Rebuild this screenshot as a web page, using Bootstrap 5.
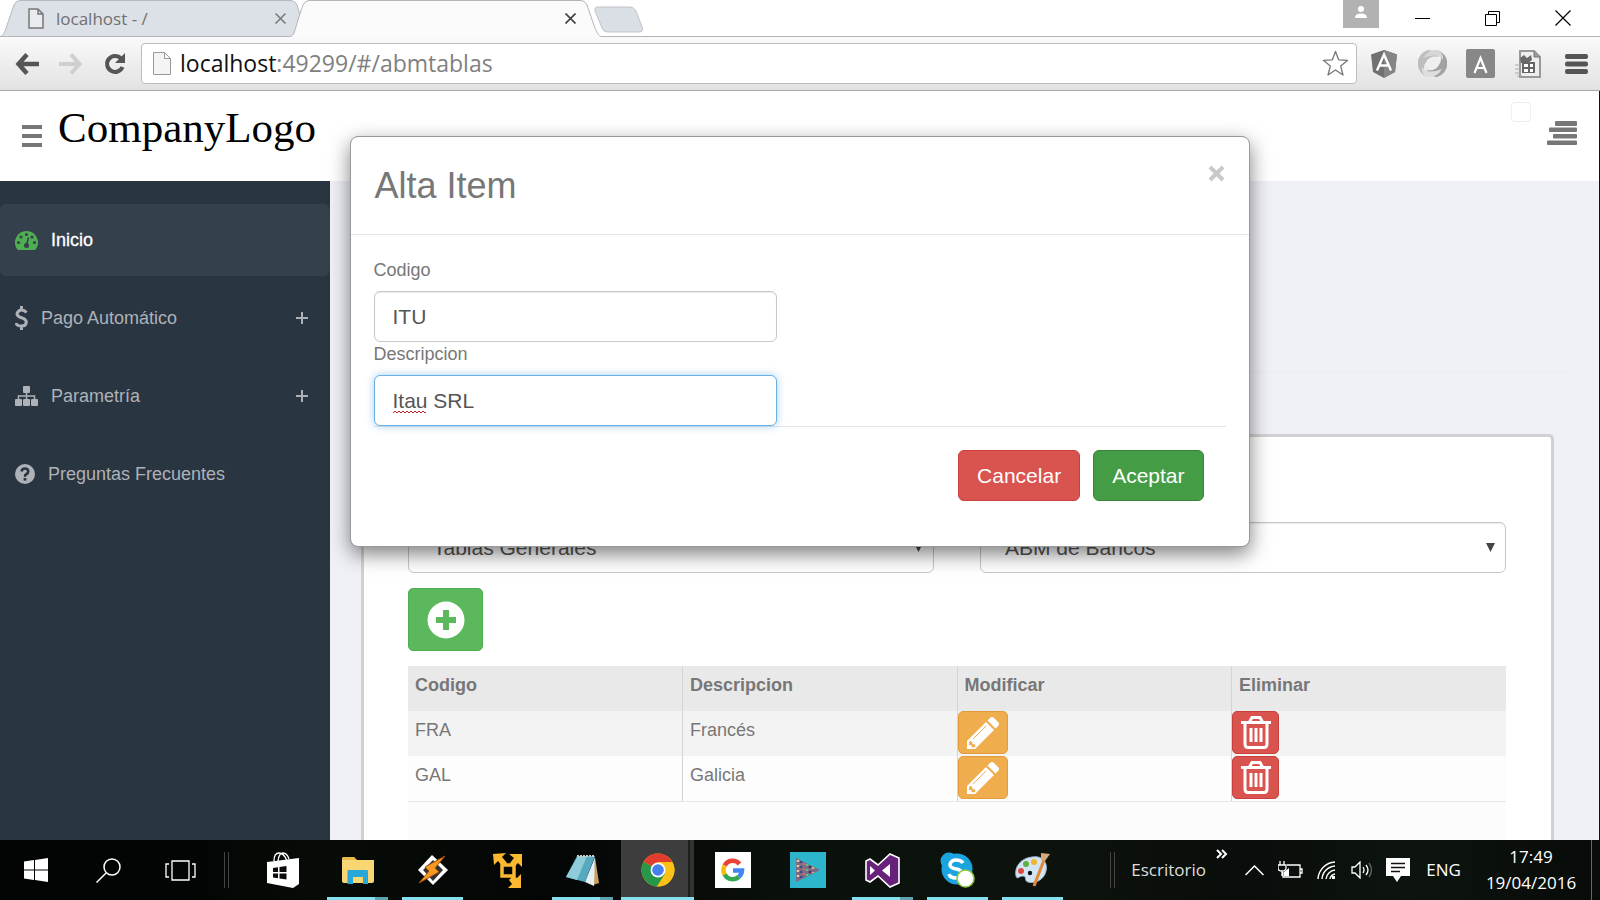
<!DOCTYPE html>
<html lang="es">
<head>
<meta charset="utf-8">
<meta name="viewport" content="width=device-width, initial-scale=1">
<title>ABM Tablas</title>
<link href="https://cdn.jsdelivr.net/npm/bootstrap@5.3.0/dist/css/bootstrap.min.css" rel="stylesheet">
<style>
  body { font-family: "Liberation Sans", Arial, sans-serif; font-size: 18px; line-height: 24px; color: #777; background: #fff; }
  svg { display: block; flex: none; }
  .plain { border: 0; background: none; padding: 0; color: inherit; display: flex; align-items: center; justify-content: center; }
  .chrome-font { font-family: "Open Sans", "Noto Sans", sans-serif; }

  /* browser window */
  .tabstrip { height: 37px; border-bottom: 1px solid #b4b4b4; }
  .tab-item { height: 37px; width: 300px; padding: 0 14px 0 28px; margin-bottom: -1px; font-size: 17px; color: #707070; z-index: 0; }
  .tab-item.current { width: 312px; margin-left: -10px; padding-right: 26px; z-index: 1; color: #333; }
  .tab-shape { position: absolute; inset: 0; width: 100%; height: 100%; z-index: -1; }
  .tab-new { margin: 6px 0 auto -8px; }
  .user-chip { width: 36px; height: 28px; background: #b2b2b2; }
  .win-btns { gap: 55px; margin-left: 36px; margin-right: 29px; }
  .toolbar { height: 54px; padding-left: 5px; background: linear-gradient(#fafafa, #e2e2e2); border-bottom: 1px solid #a9a9a9; }
  .toolbar .nav-btn { width: 44px; height: 44px; }
  .toolbar .ext-btn { width: 48px; height: 44px; }
  .omnibox { height: 41px; margin: 0 3px 0 4px; padding: 0 7px 0 11px; gap: 9px; border: 1px solid #bdbdbd; border-radius: 4px; background: #fff; }
  .omnibox .url { font-size: 23px; line-height: 32px; padding-bottom: 2px; color: #808080; }
  .omnibox .url b { font-weight: 400; color: #111; }

  /* application */
  .app { border-right: 1px solid #111; min-height: 0; }
  .app-head { height: 90px; padding: 0 22px; }
  .brand { font-family: "Liberation Serif", "Times New Roman", serif; font-size: 43px; line-height: 50px; color: #000; text-decoration: none; }
  .burger { margin-top: 34px; }
  .panel-toggle { margin-top: 30px; }
  .tick { appearance: none; width: 20px; height: 20px; margin: 11px 0 0; border: 1px solid #eee; border-radius: 4px; background: #fff; }
  .side { width: 330px; background: #2a3542; padding-top: 23px; }
  .side a { height: 72px; margin-bottom: 6px; padding: 0 22px 0 15px; gap: 13px; border-radius: 6px; color: #aeb2b7; text-decoration: none; }
  .side a.current { background: #35404d; color: #fff; -webkit-text-stroke: .3px #fff; }
  .work { background: #f0f1f7; padding: 0 45px 0 31px; }
  .work-head { height: 191px; border-bottom: 1px solid #ebebf0; margin: 0 -16px 62px; }
  .panel { border: 3px solid #d1d1d1; border-bottom: 0; border-radius: 5px 5px 0 0; background: #fff; padding: 85px 45px 0 44px; }
  .field { height: 51px; font-size: 21px; line-height: 28px; color: #555; border: 1px solid #c8c8c8; border-radius: 6px; background-color: #fff; padding: 0 18px; box-shadow: inset 0 1px 1px rgba(0,0,0,.08); }
  .pick { padding: 0 24px; background-image: url("data:image/svg+xml,%3Csvg xmlns='http://www.w3.org/2000/svg' viewBox='0 0 10 10'%3E%3Cpath d='M0 0h10L5 10z' fill='%23444'/%3E%3C/svg%3E"); background-size: 9px 9px; background-position: right 10px center; }
  .act { border-radius: 5px; border: 1px solid; padding: 0; display: flex; align-items: center; justify-content: center; color: #fff; }
  .act-add { width: 75px; height: 63px; background: #5cb85c; border-color: #4cae4c; margin: 15px 0; }
  .act-edit { width: 50px; height: 43px; background: #f0ad4e; border-color: #e39d38; }
  .act-del { width: 47px; height: 43px; background: #d9534f; border-color: #c9403c; }
  .grid-tbl { table-layout: fixed; margin: 0; color: #777; line-height: 22px; }
  .grid-tbl > :not(caption) > * > * { height: 45px; padding: 8px 7px 0; color: #777; background: #fdfdfd; border: 0; border-left: 1px solid #d4d4d4; vertical-align: top; box-shadow: none; }
  .grid-tbl > thead > tr > th { background: #e9e9e9; }
  .grid-tbl > tbody > tr:first-child > td { background: #f3f3f3; }
  .grid-tbl > :not(caption) > * > :first-child { border-left: 0; }
  .grid-tbl > tbody > tr:last-child > td { border-bottom: 1px solid #e6e6e6; }
  .grid-tbl > tbody > tr > td.act-cell { padding: 0; }
  .grid-rest { height: 100px; background: #fcfcfc; }

  /* dialog */
  .dlg { max-width: 900px; margin: 45px auto 0; }
  .dlg .modal-content { border: 1px solid #999; border-radius: 8px; box-shadow: 0 7px 20px rgba(0,0,0,.5); color: #777; }
  .dlg .modal-header { padding: 24px 24px 23px; height: 98px; border-bottom: 1px solid #e5e5e5; align-items: flex-start; }
  .dlg .modal-title { font-size: 36px; line-height: 50px; font-weight: 400; }
  .dlg .modal-body { padding: 23px 23px 0; }
  .dlg label { line-height: 25px; margin-bottom: 8px; }
  .dlg .field { width: 403px; }
  .dlg .field.active-field { border-color: #66afe9; box-shadow: 0 0 9px rgba(102,175,233,.6); }
  .typo { position: absolute; left: 19px; bottom: 12px; }
  .dlg .modal-footer { margin: 0 23px; padding: 23px 22px 45px; border-top: 1px solid #e5e5e5; gap: 13px; }
  .dlg .modal-footer .btn { height: 51px; margin: 0; padding: 0 18px; font-size: 21px; line-height: 28px; border-radius: 6px; color: #fff; }
  .btn-no { background: #d9534f; border-color: #c9403c; }
  .btn-yes { background: #449d44; border-color: #398439; }

  /* taskbar */
  .taskbar { height: 60px; color: #fff; font-size: 17px; line-height: 26px; background: linear-gradient(90deg, #030504 0 12%, #070c07 20%, #040605 34%, #0a100b 50%, #0d130c 65%, #090d0b 78%, #0d140f 88%, #080b09); }
  .slot { height: 60px; width: 75px; }
  .slot-sys { width: 72px; }
  .slot-tray { width: 36px; }
  .running::after { content: ""; position: absolute; left: 7px; right: 7px; bottom: 0; height: 3px; background: #83e0ee; }
  .running.multi::after { background: linear-gradient(90deg, #83e0ee 48px, #5ea3ad 48px); }
  .running.focused::after { left: 1px; right: 1px; }
  .focused { background: linear-gradient(90deg, transparent 1px, #3c3d3c 1px 68px, #1c1e1c 68px 70px, #333 70px 74px, transparent 74px); }
  .bars { width: 5px; height: 36px; border: solid #444; border-width: 0 1px; margin: 0 16px 0 8px; }
  .desk { color: #ddd; }
  .more { margin: 0 8px 32px 10px; }
  .lang { width: 55px; }
  .clock { width: 120px; }
  .peek { width: 9px; height: 60px; border-left: 1px solid #666; }
</style>
</head>
<body class="vh-100 overflow-hidden d-flex flex-column">

<header class="tabstrip d-flex flex-shrink-0">
  <div class="tab-item position-relative d-flex align-items-center chrome-font">
    <svg class="tab-shape" viewBox="0 0 300 37" preserveAspectRatio="none"><path d="M0 36.500C5 35 4 33 14 5Q16 .5 20 .5H290Q295 .5 297 5L300 15V36.500z" fill="#dce0e7" stroke="#b4b7bb"/></svg>
    <svg width="16" height="21" viewBox="0 0 16 21" fill="#e9ebee" stroke="#777" stroke-width="1.500"><path d="M1 1h9l5 5v14H1zM10 1v5h5"/></svg>
    <span class="ms-2 ps-1 flex-grow-1">localhost - /</span>
    <button class="plain" aria-label="Cerrar pestaña"><svg width="11" height="11" viewBox="0 0 11 11" stroke="#777" stroke-width="1.500"><path d="M.5.5l10 10M10.500.5l-10 10"/></svg></button>
  </div>
  <div class="tab-item current position-relative d-flex align-items-center justify-content-end">
    <svg class="tab-shape" viewBox="0 0 312 37" preserveAspectRatio="none"><path d="M0 36.500C5 36 4 30 13 5Q15 .5 19 .5H291Q295 .5 297 5C305 28 307 36.500 312 36.500V37H0z" fill="#fbfbfb"/><path d="M0 36.500C5 36 4 30 13 5Q15 .5 19 .5H291Q295 .5 297 5C305 28 307 36.500 312 36.500" fill="none" stroke="#b4b4b4"/></svg>
    <button class="plain" aria-label="Cerrar pestaña"><svg width="11" height="11" viewBox="0 0 11 11" stroke="#444" stroke-width="1.700"><path d="M.5.5l10 10M10.500.5l-10 10"/></svg></button>
  </div>
  <button class="plain tab-new" aria-label="Nueva pestaña"><svg width="50" height="27" viewBox="0 0 50 27"><path d="M4 1H36Q40 1 42 5L48 21Q50 26 45 26H14Q9 26 8 22L1 5Q0 1 4 1z" fill="#dadfe6" stroke="#c0c3c8"/></svg></button>
  <div class="ms-auto d-flex">
    <button class="plain user-chip pb-1" aria-label="Usuario"><svg width="12" height="12" viewBox="0 0 12 12" fill="#fff"><circle cx="6" cy="3" r="3"/><path d="M0 12Q0 7.500 6 7.500T12 12z"/></svg></button>
    <div class="win-btns d-flex align-items-center">
      <button class="plain" aria-label="Minimizar"><svg width="15" height="15" stroke="#000"><path d="M0 7.500h15"/></svg></button>
      <button class="plain" aria-label="Restaurar"><svg width="15" height="15" fill="none" stroke="#000"><path d="M.5 3.500h11v11H.5zM3.500 3.500v-3h11v11h-3"/></svg></button>
      <button class="plain" aria-label="Cerrar"><svg width="16" height="16" stroke="#000" stroke-width="1.200"><path d="M.5.5l15 15M15.500.5l-15 15"/></svg></button>
    </div>
  </div>
</header>

<nav class="toolbar d-flex align-items-center flex-shrink-0 chrome-font" aria-label="Navegador">
  <button class="plain nav-btn" aria-label="Atrás"><svg width="24" height="22" viewBox="0 0 24 22" fill="none" stroke="#555" stroke-width="4.500"><path d="M12 1.500L3.500 11l8.500 9.500M4 11h20"/></svg></button>
  <button class="plain nav-btn" aria-label="Adelante"><svg width="24" height="22" viewBox="0 0 24 22" fill="none" stroke="#cfcfcf" stroke-width="4"><path d="M12 1.500l8.500 9.500-8.500 9.500M20 11H0"/></svg></button>
  <button class="plain nav-btn" aria-label="Recargar"><svg width="22" height="22" viewBox="0 0 22 22"><path d="M17 5.500A8 8 0 1 0 18.500 14" fill="none" stroke="#555" stroke-width="4"/><path d="M21 0v10H11z" fill="#555"/></svg></button>
  <div class="omnibox flex-grow-1 d-flex align-items-center">
    <svg width="18" height="23" viewBox="0 0 18 23" fill="#f4f4f4" stroke="#999"><path d="M.5.5h11l6 6v16H.5zM11.500.5v6h6"/></svg>
    <span class="url flex-grow-1"><b>localhost</b>:49299/#/abmtablas</span>
    <button class="plain" aria-label="Favorito"><svg width="27" height="27" viewBox="0 0 27 27" fill="#fff" stroke="#777" stroke-width="1.300" stroke-linejoin="round"><path d="M13.500 1.500l3.200 8.300 9 .5-7 5.800 2.300 8.900-7.500-5-7.500 5 2.300-8.900-7-5.800 9-.5z"/></svg></button>
  </div>
  <button class="plain ext-btn" aria-label="Angular"><svg width="26" height="28" viewBox="0 0 26 28"><path d="M13 0l13 4.500-2 17.500-11 6-11-6L0 4.500z" fill="#707070"/><path d="M13 0l13 4.500-2 17.500-11 6z" fill="#858585"/><path d="M6 20.500L13 4.500l7 16M8.500 15.500h9" fill="none" stroke="#fff" stroke-width="2.400"/></svg></button>
  <button class="plain ext-btn" aria-label="JSON"><svg width="29" height="29" viewBox="0 0 29 29"><path d="M10 1A14 14 0 0 0 10 28Q3 20 8 13T20 8Q17 1 10 1z" fill="#bdbdbd"/><path d="M19 28A14 14 0 0 0 19 1Q26 9 21 16T9 21Q12 28 19 28z" fill="#a2a2a2"/><path d="M5 9Q10 0 20 1q6 4 5 10Q20 3 5 9z" fill="#d6d6d6"/><path d="M24 20q-5 9-15 8-6-4-5-10Q9 26 24 20z" fill="#dedede"/><circle cx="14.500" cy="14.500" r="6" fill="#efefef"/></svg></button>
  <button class="plain ext-btn" aria-label="Extensión A"><svg width="29" height="29" viewBox="0 0 29 29"><rect width="29" height="29" rx="2" fill="#878787"/><path d="M8.500 24l6-15 6 15M10.500 19h8" fill="none" stroke="#fff" stroke-width="2.200"/></svg></button>
  <button class="plain ext-btn" aria-label="Documento"><svg width="26" height="28" viewBox="0 0 26 28"><path d="M5 1h14l6 6v20H5z" fill="#eee" stroke="#999" stroke-width="2"/><path d="M19 1v6h6" fill="#999" stroke="#777"/><path d="M5 8l4-3 3 3 4-3 1 5-4 3H6z" fill="#6a6a6a"/><path d="M7 12h13v11H7z" fill="#666"/><path d="M9 14h4v3H9zM15 14h3v3h-3zM9 19h4v3H9zM15 19h3v3h-3z" fill="#fff"/><path d="M0 15h5M0 19h5M0 23h6M2 26h5" stroke="#aaa"/></svg></button>
  <button class="plain ext-btn" aria-label="Menú"><svg width="23" height="20" viewBox="0 0 23 20" fill="#555"><rect width="23" height="5" rx="2"/><rect y="7.500" width="23" height="5" rx="2"/><rect y="15" width="23" height="5" rx="2"/></svg></button>
</nav>

<div class="app flex-grow-1 position-relative d-flex flex-column overflow-hidden">
  <div class="app-head d-flex align-items-start flex-shrink-0 bg-white">
    <button class="plain burger" aria-label="Mostrar menú"><svg width="20" height="22" fill="#777"><path d="M0 0h20v4H0zM0 9h20v4H0zM0 18h20v4H0z"/></svg></button>
    <a class="brand mt-2 ps-3 pt-1" href="#">CompanyLogo</a>
    <input class="tick ms-auto" type="checkbox" aria-label="Fijar cabecera">
    <button class="plain panel-toggle ms-3" aria-label="Panel derecho"><svg width="30" height="24" fill="#777"><rect x="8" width="22" height="5" rx="1"/><rect x="2" y="6.500" width="28" height="4.500" rx="1"/><rect x="6" y="13" width="24" height="4.500" rx="1"/><rect y="19.500" width="30" height="4.500" rx="1"/></svg></button>
  </div>

  <div class="d-flex flex-grow-1 overflow-hidden">
    <nav class="side flex-shrink-0" aria-label="Principal">
      <a class="current d-flex align-items-center" href="#">
        <svg width="23" height="19" viewBox="0 0 23 19"><path d="M11.500 0A11.500 11.500 0 0 0 2 18q.5 1 1.500 1h16q1 0 1.500-1A11.500 11.500 0 0 0 11.500 0z" fill="#4fad52"/><g fill="#35404d"><circle cx="3.500" cy="11.500" r="1.600"/><circle cx="6" cy="6" r="1.600"/><circle cx="11.500" cy="3.500" r="1.600"/><circle cx="17" cy="6" r="1.600"/><circle cx="19.500" cy="11.500" r="1.600"/><circle cx="11.500" cy="14.500" r="2.500"/></g><path d="M11.500 14.500l2-8" stroke="#35404d" stroke-width="1.500"/></svg>
        <span>Inicio</span></a>
      <a class="d-flex align-items-center" href="#">
        <svg width="13" height="24" viewBox="0 0 13 24" fill="none" stroke="#aeb2b7" stroke-width="3"><path d="M11.500 6.500Q9.500 4 6.500 4T2 7.500Q2 10.500 6.500 11.700T11.300 16Q11.300 20 6.500 20T1 17M6.500 0v4M6.500 20v4"/></svg>
        <span>Pago Automático</span><svg class="ms-auto" width="12" height="12" stroke="#aeb2b7" stroke-width="2"><path d="M0 6h12M6 0v12"/></svg></a>
      <a class="d-flex align-items-center" href="#">
        <svg width="23" height="20" viewBox="0 0 23 20" fill="#aeb2b7"><rect x="8" width="7" height="7" rx="1"/><rect y="13" width="7" height="7" rx="1"/><rect x="8" y="13" width="7" height="7" rx="1"/><rect x="16" y="13" width="7" height="7" rx="1"/><path d="M11.500 6v8M3.500 14v-4h16v4" fill="none" stroke="#aeb2b7" stroke-width="1.500"/></svg>
        <span>Parametría</span><svg class="ms-auto" width="12" height="12" stroke="#aeb2b7" stroke-width="2"><path d="M0 6h12M6 0v12"/></svg></a>
      <a class="d-flex align-items-center" href="#">
        <svg width="20" height="20" viewBox="0 0 20 20"><circle cx="10" cy="10" r="10" fill="#aeb2b7"/><path d="M6.500 7.500Q7 4.500 10 4.500T13.300 7.500Q13.300 9 11.500 10T10 12.800" fill="none" stroke="#2a3542" stroke-width="2.600"/><path d="M8.600 14h2.800v2.600H8.600z" fill="#2a3542"/></svg>
        <span>Preguntas Frecuentes</span></a>
    </nav>

    <main class="work flex-grow-1">
      <div class="work-head"></div>
      <section class="panel">
        <div class="row" style="--bs-gutter-x:46px">
          <div class="col-6"><select class="form-select field pick" aria-label="Grupo"><option>Tablas Generales</option></select></div>
          <div class="col-6"><select class="form-select field pick" aria-label="Tabla"><option>ABM de Bancos</option></select></div>
        </div>
        <button class="act act-add" aria-label="Agregar"><svg width="38" height="38" viewBox="0 0 38 38"><circle cx="19" cy="19" r="18.500" fill="#fff"/><path d="M19 9v20M9 19h20" stroke="#5cb85c" stroke-width="6"/></svg></button>
        <table class="table grid-tbl">
          <thead><tr><th>Codigo</th><th>Descripcion</th><th>Modificar</th><th>Eliminar</th></tr></thead>
          <tbody>
            <tr><td>FRA</td><td>Francés</td>
              <td class="act-cell"><button class="act act-edit" aria-label="Modificar FRA"><svg width="32" height="32" viewBox="0 0 32 32"><path d="M0 32v-8L19 5l8 8L8 32zM20.500 3.500L23 1q2-2 4 0l4 4q2 2 0 4l-2.500 2.500z" fill="#fff"/><path d="M6 22L19 9" stroke="#f0ad4e"/><path d="M2 26l1-2 2 .5.5 2.500 2.500.5.500 2-2 1-2-.5v-2H2z" fill="#f0ad4e"/></svg></button></td>
              <td class="act-cell"><button class="act act-del" aria-label="Eliminar FRA"><svg width="30" height="33" viewBox="0 0 30 33" fill="none" stroke="#fff" stroke-width="3"><path d="M0 6.500h30M8.500 6L11 1.500h8L21.500 6M4 7v21q0 3.500 3 3.500h16q3 0 3-3.500V7"/><path d="M10 12v14M15 12v14M20 12v14"/></svg></button></td></tr>
            <tr><td>GAL</td><td>Galicia</td>
              <td class="act-cell"><button class="act act-edit" aria-label="Modificar GAL"><svg width="32" height="32" viewBox="0 0 32 32"><path d="M0 32v-8L19 5l8 8L8 32zM20.500 3.500L23 1q2-2 4 0l4 4q2 2 0 4l-2.500 2.500z" fill="#fff"/><path d="M6 22L19 9" stroke="#f0ad4e"/><path d="M2 26l1-2 2 .5.5 2.500 2.500.5.500 2-2 1-2-.5v-2H2z" fill="#f0ad4e"/></svg></button></td>
              <td class="act-cell"><button class="act act-del" aria-label="Eliminar GAL"><svg width="30" height="33" viewBox="0 0 30 33" fill="none" stroke="#fff" stroke-width="3"><path d="M0 6.500h30M8.500 6L11 1.500h8L21.500 6M4 7v21q0 3.500 3 3.500h16q3 0 3-3.500V7"/><path d="M10 12v14M15 12v14M20 12v14"/></svg></button></td></tr>
          </tbody>
        </table>
        <div class="grid-rest"></div>
      </section>
    </main>
  </div>

  <div class="modal d-block position-absolute" role="dialog" aria-labelledby="dlgTitle">
    <div class="modal-dialog dlg">
      <form class="modal-content">
        <div class="modal-header">
          <h1 class="modal-title" id="dlgTitle">Alta Item</h1>
          <button type="button" class="plain pt-1 ms-auto" aria-label="Cerrar"><svg width="17" height="17" viewBox="0 0 17 17" stroke="#c9c9c9" stroke-width="4"><path d="M2 2l13 13M15 2L2 15"/></svg></button>
        </div>
        <div class="modal-body">
          <label class="d-block" for="cod">Codigo</label>
          <input class="form-control field" id="cod" type="text" value="ITU">
          <label class="d-block" for="desc">Descripcion</label>
          <div class="position-relative">
            <input class="form-control field active-field" id="desc" type="text" value="Itau SRL" spellcheck="false">
            <svg class="typo" width="35" height="4" aria-hidden="true"><path d="M0 3l2-2 2 2 2-2 2 2 2-2 2 2 2-2 2 2 2-2 2 2 2-2 2 2 2-2 2 2 2-2 2 2 1-1" fill="none" stroke="#c0202a"/></svg>
          </div>
        </div>
        <div class="modal-footer">
          <button type="button" class="btn btn-no">Cancelar</button>
          <button type="button" class="btn btn-yes">Aceptar</button>
        </div>
      </form>
    </div>
  </div>
</div>

<footer class="taskbar d-flex align-items-center flex-shrink-0 chrome-font">
  <button class="plain slot slot-sys" aria-label="Inicio de Windows"><svg width="24" height="24" viewBox="0 0 24 24" fill="#fff"><path d="M0 3.500l10-1.400v9.400H0zM11 2l13-2v11.500H11zM0 12.500h10v9.400L0 20.500zM11 12.500h13V24l-13-2z"/></svg></button>
  <button class="plain slot slot-sys" aria-label="Buscar"><svg width="25" height="25" fill="none" stroke="#fff" stroke-width="1.500"><circle cx="16" cy="9" r="8"/><path d="M10 15L.5 24.500"/></svg></button>
  <button class="plain slot slot-sys" aria-label="Vista de tareas"><svg width="31" height="21" fill="none" stroke="#fff" stroke-width="1.300"><path d="M7 1h17v19H7zM4 4H1v13h3M27 4h3v13h-3"/></svg></button>
  <div class="bars"></div>
  <button class="plain slot" aria-label="Tienda"><svg width="32" height="36" viewBox="0 0 32 36"><path d="M7 9Q7 1 12 1t8 8M11 9Q12 1 16 1t6 6" fill="none" stroke="#fff" stroke-width="1.300"/><path d="M0 10l32-4v26l-6 4-26-5z" fill="#fff"/><path d="M6 16l5-.8V20H6zM12.500 15l7-1v6h-7zM6 21.500h5v4.800L6 25.500zM12.500 21.500h7v6l-7-1z" fill="#0a0c0a"/></svg></button>
  <button class="plain slot position-relative running multi" aria-label="Explorador"><svg width="32" height="27" viewBox="0 0 32 27"><path d="M0 2q0-2 2-2h10l3 3h17v21q0 2-2 2H2q-2 0-2-2z" fill="#f7d673"/><path d="M0 2q0-2 2-2h10l2 3H0z" fill="#e8b84a"/><path d="M5.500 27V14q0-1 1-1h18.500q1 0 1 1v13h-5v-7H11v7z" fill="#28a8d8"/></svg></button>
  <button class="plain slot position-relative running" aria-label="Winamp"><svg width="30" height="30" viewBox="0 0 30 30"><path d="M14 0l16 15-15 15L0 15z" fill="#fff"/><path d="M15 5l10 10-10 11L5 15z" fill="#333"/><path d="M27 1L7 12l4 4L1 28l20-11-4-4z" fill="#f79a24" stroke="#a44f09"/></svg></button>
  <button class="plain slot" aria-label="Máquina virtual"><svg width="30" height="35" viewBox="0 0 30 35"><g fill="#fbb92f"><path d="M0 1l13-1-4 4 5 6-4 4-5-6-4 4z"/><path d="M16 1h13v13l-4-4-4 4-4-4 4-5z"/><path d="M28 21v14H15l4-4-3-4 4-4 4 2z"/></g><path d="M9 12h12v11H9z" fill="none" stroke="#fbb92f" stroke-width="3.500"/></svg></button>
  <button class="plain slot position-relative running multi" aria-label="Bloc de notas"><svg width="33" height="31" viewBox="0 0 33 31"><path d="M29 2l4 26-6 2z" fill="#c9a15c"/><path d="M29 2l-1 29-9-4z" fill="#e4f1f4"/><path d="M11 1h18l-10 26L0 22z" fill="#56a9bf"/><path d="M12 1h9l-10 24L0 22z" fill="#8fcbd8"/><path d="M11 1h18" stroke="#ccc" stroke-width="2" stroke-dasharray="2 1"/></svg></button>
  <button class="plain slot position-relative running focused" aria-label="Chrome"><svg width="34" height="34" viewBox="0 0 34 34"><circle cx="17" cy="17" r="16.500" fill="#fbc116"/><path d="M17 17L2.700 8.700A16.500 16.500 0 0 1 31.300 9H17z" fill="#e33b2e"/><path d="M2.700 8.700A16.500 16.500 0 0 0 16 33.500L24 21l-7-4z" fill="#279847"/><path d="M31.300 9H17v8l7 4-8 12.500A16.500 16.500 0 0 0 31.300 9z" fill="#fbc116"/><circle cx="17" cy="17" r="7.500" fill="#fff"/><circle cx="17" cy="17" r="5.800" fill="#4581ee"/></svg></button>
  <button class="plain slot" aria-label="Google"><svg width="36" height="36" viewBox="0 0 36 36" fill="none" stroke-width="4.500"><path d="M0 0h36v36H0z" fill="#fff"/><path d="M9.700 13.500A9 9 0 0 1 24.500 12" stroke="#e94435"/><path d="M9.700 22.500A9 9 0 0 1 9.700 13.500" stroke="#fbbb05"/><path d="M24 24.600A9 9 0 0 1 9.700 22.500" stroke="#34a853"/><path d="M18 18.500h9A9 9 0 0 1 24 24.600" stroke="#4285f4"/></svg></button>
  <button class="plain slot" aria-label="Reproductor"><svg width="36" height="36" viewBox="0 0 36 36"><path d="M0 0h36v36H0z" fill="#2cb5cb"/><path d="M6 6l24 12L6 30z" fill="#7d6a86"/><g stroke-width="2.500" stroke-dasharray="2 3"><path d="M8 8v20" stroke="#e8c9a0"/><path d="M11 9v18" stroke="#3a4a8c"/><path d="M14 11v14" stroke="#d26a5a"/><path d="M17 12v12" stroke="#5ac08a"/><path d="M20 14v8" stroke="#33335a"/><path d="M23 15v6" stroke="#d8b070"/></g></svg></button>
  <button class="plain slot position-relative running multi" aria-label="Visual Studio"><svg width="35" height="35" viewBox="0 0 35 35"><path d="M25 1l9 4v25l-9 4-12-11-8 6-4-2V8l4-2 8 6z" fill="#68217a" stroke="#fff" stroke-width="1.600"/><path d="M5 13l5 4.500L5 22zM25 11v13l-8-6.500z" fill="#fff"/></svg></button>
  <button class="plain slot position-relative running" aria-label="Skype"><svg width="35" height="36" viewBox="0 0 35 36"><circle cx="9" cy="9" r="8.500" fill="#1ba5e0"/><circle cx="17" cy="17" r="15.500" fill="#1ba5e0"/><path d="M23 11Q21 8 16 8t-6 4.500Q10 16 16 17t6 4.500Q22 26 16 26t-7-4" fill="none" stroke="#fff" stroke-width="3.500"/><circle cx="25.500" cy="26.500" r="8.500" fill="#fff" stroke="#8dc63f" stroke-width="1.600"/></svg></button>
  <button class="plain slot position-relative running" aria-label="Paint"><svg width="36" height="36" viewBox="0 0 36 36"><path d="M17 5c11-2 16 6 14 14-2 9-11 13-18 11-4-1-1-6-5-6s-6 4-7 0C-1 15 6 6 17 5z" fill="#d3e4f3" stroke="#9bb6cf"/><circle cx="6" cy="19" r="3" fill="#e0493e"/><circle cx="11" cy="12" r="3" fill="#5dae45"/><circle cx="19" cy="10" r="3" fill="#f1b52c"/><circle cx="15" cy="21" r="2.200" fill="#111"/><path d="M29 8L19 34" stroke="#e08a35" stroke-width="3"/><path d="M26 1l9 1-5 7-4-1z" fill="#d7a87a"/></svg></button>

  <div class="ms-auto d-flex align-items-center">
    <div class="bars"></div>
    <span class="desk">Escritorio</span>
    <button class="plain more" aria-label="Más"><svg width="12" height="10" fill="none" stroke="#fff" stroke-width="2"><path d="M1 1l4 4-4 4M6 1l4 4-4 4"/></svg></button>
    <button class="plain slot slot-tray" aria-label="Iconos ocultos"><svg width="19" height="11" fill="none" stroke="#fff" stroke-width="1.500"><path d="M.5 10l9-9 9 9"/></svg></button>
    <button class="plain slot slot-tray" aria-label="Batería"><svg width="25" height="18" fill="none" stroke="#fff" stroke-width="1.300"><path d="M9 4h13v12H5v-5M22 8h2v4h-2M2 0v4M6 0v4M0 4h8v3q0 3-4 3T0 7zM4 10v5"/><path d="M6 11l5-4v8H6z" fill="#fff" stroke="none"/></svg></button>
    <button class="plain slot slot-tray" aria-label="Red"><svg width="19" height="19" fill="none" stroke="#fff" stroke-width="1.400"><path d="M1 18A18 18 0 0 1 18 1M5 18A14 14 0 0 1 18 5M9 18A10 10 0 0 1 18 9M13 18a6 6 0 0 1 5-5"/><path d="M15 15h3v3h-3z" fill="#fff" stroke="none"/></svg></button>
    <button class="plain slot slot-tray" aria-label="Volumen"><svg width="22" height="18" fill="none" stroke="#fff" stroke-width="1.300"><path d="M1 6h3l5-5v16l-5-5H1zM12 6q2 3 0 6M15 4q4 5 0 10"/><path d="M18 2q5 7 0 14" stroke="#666"/></svg></button>
    <button class="plain slot slot-tray" aria-label="Notificaciones"><svg width="24" height="24" viewBox="0 0 24 24"><path d="M0 0h24v18H15l-4 6-4-6H0z" fill="#fff"/><path d="M5 5.500h14M5 9.500h14M5 13.500h9" stroke="#111" stroke-width="1.300"/></svg></button>
    <span class="lang text-center">ENG</span>
    <time class="clock text-center">17:49<br>19/04/2016</time>
    <div class="peek"></div>
  </div>
</footer>
<script src="https://cdn.jsdelivr.net/npm/bootstrap@5.3.0/dist/js/bootstrap.bundle.min.js"></script>
</body>
</html>
